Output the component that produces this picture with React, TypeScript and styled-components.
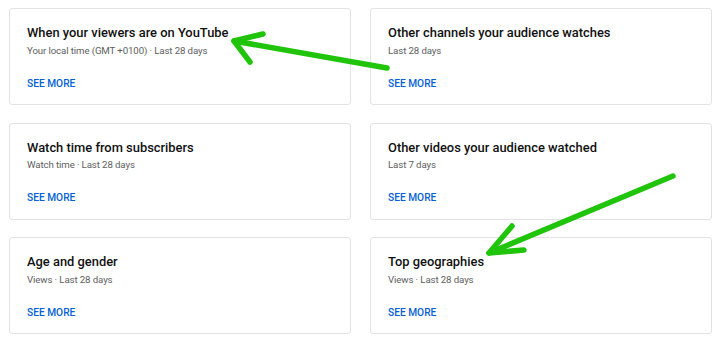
import styled, { createGlobalStyle } from "styled-components";

const GlobalStyle = createGlobalStyle`
  html, body {
    margin: 0;
    padding: 0;
    background: #ffffff;
  }
  body {
    font-family: Roboto, "Liberation Sans", Arial, sans-serif;
    -webkit-font-smoothing: antialiased;
  }
`;

interface CardData {
  title: string;
  subtitle: string;
}

const cards: CardData[] = [
  {
    title: "When your viewers are on YouTube",
    subtitle: "Your local time (GMT +0100) · Last 28 days",
  },
  { title: "Other channels your audience watches", subtitle: "Last 28 days" },
  { title: "Watch time from subscribers", subtitle: "Watch time · Last 28 days" },
  { title: "Other videos your audience watched", subtitle: "Last 7 days" },
  { title: "Age and gender", subtitle: "Views · Last 28 days" },
  { title: "Top geographies", subtitle: "Views · Last 28 days" },
];

const App = () => {
  return (
    <>
      <GlobalStyle />
      <Page>
        <Grid>
          {cards.map(card => (
            <Card key={card.title}>
              <Title>{card.title}</Title>
              <Subtitle>{card.subtitle}</Subtitle>
              <SeeMore href="#">SEE MORE</SeeMore>
            </Card>
          ))}
        </Grid>
        <Arrows width="720" height="342" viewBox="0 0 720 342">
          <g
            fill="none"
            stroke="#1fc40b"
            strokeWidth="5.5"
            strokeLinecap="round"
            strokeLinejoin="round"
          >
            <path d="M387 68 L234 41" />
            <path d="M263 34 L234 41 L250 62" />
            <path d="M673 176 L489 253" />
            <path d="M512 226 L489 253 L524 250" />
          </g>
        </Arrows>
      </Page>
    </>
  );
};

export default App;

const Page = styled.div`
  position: relative;
  width: 720px;
  height: 342px;
  overflow: hidden;
`;

const Grid = styled.div`
  display: grid;
  grid-template-columns: 342px 342px;
  grid-auto-rows: 97px;
  column-gap: 19px;
  row-gap: 17.5px;
  padding: 8px 8px 0 9px;
`;

const Card = styled.div`
  box-sizing: border-box;
  display: flex;
  flex-direction: column;
  align-items: flex-start;
  padding: 14px 17px 0 17px;
  background: #ffffff;
  border: 1px solid #e3e3e3;
  border-radius: 3px;
`;

const Title = styled.div`
  font-size: 12.9px;
  line-height: 20px;
  font-weight: 500;
  color: #111111;
`;

const Subtitle = styled.div`
  margin-top: 0.5px;
  font-size: 9.7px;
  line-height: 14px;
  letter-spacing: -0.12px;
  color: #606060;
`;

const SeeMore = styled.a`
  margin-top: 19px;
  font-size: 10.2px;
  line-height: 14px;
  font-weight: 500;
  color: #065fd4;
  text-decoration: none;
`;

const Arrows = styled.svg`
  position: absolute;
  left: 0;
  top: 0;
  pointer-events: none;
`;
